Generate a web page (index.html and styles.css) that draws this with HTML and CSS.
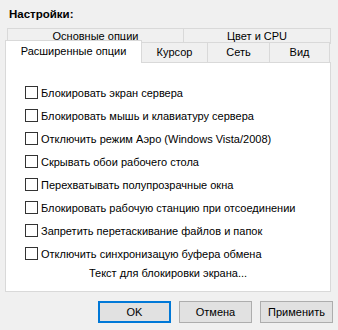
FILE: index.html
```html
<!DOCTYPE html>
<html lang="ru">
<head>
    <meta charset="UTF-8">
    <meta name="viewport" content="width=device-width, initial-scale=1.0">
    <title>Настройки</title>
    <link rel="stylesheet" href="styles.css">
</head>
<body>
    <div class="title">Настройки:</div>
    <div class="tabs">
        <div class="tab-row top">
            <div class="tab t-main">Основные опции</div>
            <div class="tab t-color">Цвет и CPU</div>
        </div>
        <div class="tab-row bottom">
            <div class="tab active">Расширенные опции</div>
            <div class="tab t-cursor">Курсор</div>
            <div class="tab t-net">Сеть</div>
            <div class="tab t-view">Вид</div>
        </div>
        <div class="panel">
            <label class="option"><span class="box"></span>Блокировать экран сервера</label>
            <label class="option"><span class="box"></span>Блокировать мышь и клавиатуру сервера</label>
            <label class="option"><span class="box"></span>Отключить режим Аэро (Windows Vista/2008)</label>
            <label class="option"><span class="box"></span>Скрывать обои рабочего стола</label>
            <label class="option"><span class="box"></span>Перехватывать полупрозрачные окна</label>
            <label class="option"><span class="box"></span>Блокировать рабочую станцию при отсоединении</label>
            <label class="option"><span class="box"></span>Запретить перетаскивание файлов и папок</label>
            <label class="option"><span class="box"></span>Отключить синхронизацую буфера обмена</label>
            <div class="lock-text">Текст для блокировки экрана...</div>
        </div>
    </div>
    <div class="buttons">
        <button class="btn default">OK</button>
        <button class="btn">Отмена</button>
        <button class="btn">Применить</button>
    </div>
</body>
</html>
```

FILE: styles.css
```css
body {
    margin: 0;
    padding: 0;
    width: 338px;
    height: 330px;
    background: #f0f0f0;
    font-family: 'Liberation Sans', Arial, sans-serif;
    font-size: 11px;
    color: #000;
}
.title {
    font-weight: bold;
    font-size: 11.5px;
    padding: 7px 0 0 9px;
    height: 21px;
    line-height: 14px;
}
.tabs {
    margin-left: 5px;
    width: 326px;
}
.tab-row {
    display: flex;
    align-items: flex-start;
}
.tab-row.top {
    margin-left: 2px;
    height: 15px;
}
.tab-row.bottom {
    height: 19px;
}
.tab {
    box-sizing: border-box;
    border: 1px solid #d9d9d9;
    border-bottom: none;
    background: #f0f0f0;
    text-align: center;
    margin-left: -1px;
}
.tab-row.top .tab {
    height: 16px;
    line-height: 15px;
}
.t-main {
    width: 177px;
    margin-left: 0;
}
.t-color {
    width: 148px;
}
.tab-row.bottom .tab {
    height: 20px;
    margin-top: -1px;
    line-height: 18px;
}
.tab-row.bottom .tab.active {
    position: relative;
    z-index: 1;
    width: 137px;
    height: 23px;
    margin-top: -3px;
    margin-left: 0;
    background: #fff;
    line-height: 20px;
}
.t-cursor {
    width: 67px;
}
.t-net {
    width: 63px;
}
.t-view {
    width: 61px;
}
.panel {
    box-sizing: border-box;
    height: 230px;
    border: 1px solid #d9d9d9;
    background: #fff;
    padding: 18px 0 0 19px;
}
.option {
    display: flex;
    align-items: center;
    gap: 3px;
    height: 23px;
}
.box {
    box-sizing: border-box;
    width: 13px;
    height: 13px;
    border: 1px solid #333;
    background: #fff;
}
.lock-text {
    height: 16px;
    line-height: 16px;
    text-align: center;
    margin-left: -19px;
}
.buttons {
    display: flex;
    justify-content: flex-end;
    gap: 8px;
    margin: 9px 5px 0 0;
}
.btn {
    box-sizing: border-box;
    width: 73px;
    height: 22px;
    padding: 0;
    background: #e1e1e1;
    border: 1px solid #adadad;
    font-family: inherit;
    font-size: 11px;
    color: #000;
}
.btn.default {
    border: 2px solid #0078d7;
}
```
